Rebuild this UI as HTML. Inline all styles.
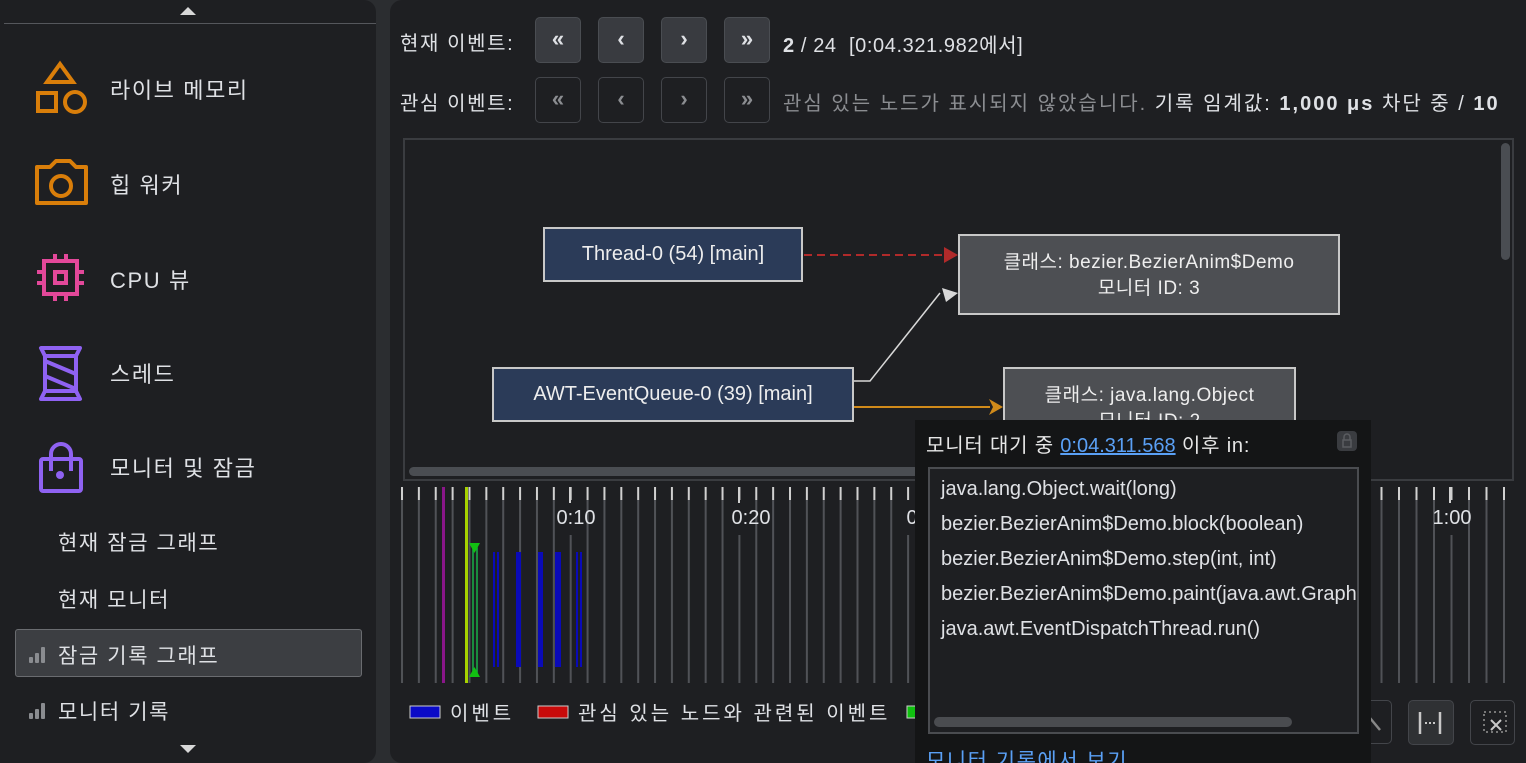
<!DOCTYPE html>
<html><head><meta charset="utf-8"><style>
*{box-sizing:border-box;margin:0;padding:0}
html,body{width:1526px;height:763px;overflow:hidden}
body{background:#2b2d30;position:relative;font-family:"Liberation Sans","Noto Sans CJK KR",sans-serif;color:#dfe1e5}
.a{position:absolute}
.left{left:0;top:0;width:376px;height:763px;background:#1e1f22;border-radius:0 12px 12px 0}
.main{left:390px;top:0;width:1136px;height:763px;background:#1e1f22;border-radius:12px 0 0 12px}
.it{position:absolute;left:110px;font-size:22px;color:#dfe1e5;letter-spacing:1.6px}
.sub{position:absolute;left:58px;font-size:21px;color:#dfe1e5;letter-spacing:1.6px}
.btn{position:absolute;width:46px;height:46px;border-radius:5px;background:#393b40;border:1px solid #4a4d52;color:#dfe1e5;font-size:22px;text-align:center;line-height:42px;font-weight:bold}
.btn2{background:#1e1f22;border:1px solid #43454a;color:#8b8d91}
.lbl{position:absolute;font-size:20px;color:#dfe1e5;letter-spacing:1.6px;white-space:nowrap}
.node{position:absolute;border:2px solid #c8c8c8;color:#eee;font-size:19px;text-align:center;white-space:nowrap}
.mono{font-size:20px;color:#dfe1e5;position:absolute;left:11px;white-space:nowrap}
</style></head><body>
<div class="a left"></div>
<div class="a" style="left:4px;top:0;width:372px;height:24px;border-bottom:1px solid #55575c"></div>
<div class="a" style="left:180px;top:7px;width:0;height:0;border-left:8px solid transparent;border-right:8px solid transparent;border-bottom:8px solid #d8d8d8"></div>
<div class="a" style="left:180px;top:745px;width:0;height:0;border-left:8px solid transparent;border-right:8px solid transparent;border-top:8px solid #d8d8d8"></div>

<svg class="a" style="left:0;top:0" width="376" height="763" fill="none" stroke-width="4">
 <g stroke="#d97e0a">
  <path d="M60 64 L73 82 L47 82 Z"/>
  <rect x="38" y="93" width="18" height="18"/>
  <circle cx="75" cy="102" r="10"/>
  <path d="M37 167 h13 l6-6 h14 l6 6 h10 v36 h-49 z" stroke-linejoin="round"/>
  <circle cx="61" cy="186" r="10"/>
 </g>
 <g stroke="#e3489a">
  <rect x="44" y="261" width="33" height="33"/>
  <rect x="55" y="272" width="11" height="11"/>
  <path d="M55 254v7M66 254v7M55 294v7M66 294v7M37 272h7M37 283h7M77 272h7M77 283h7"/>
 </g>
 <g stroke="#8f62f2" stroke-linejoin="round">
  <path d="M41 348h39l-4 8v35l4 8h-39l4-8v-35z"/>
  <path d="M45 356h31M45 391h31M45 361l31 13M45 376l31 13"/>
  <path d="M51 471v-17a10 10 0 0 1 20 0v17"/>
  <rect x="41" y="459" width="40" height="32" rx="2"/>
 </g>
 <circle cx="60" cy="475" r="4" fill="#8f62f2"/>
</svg>
<div class="it" style="top:73px">라이브 메모리</div>
<div class="it" style="top:168px">힙 워커</div>
<div class="it" style="top:263px">CPU 뷰</div>
<div class="it" style="top:357px">스레드</div>
<div class="it" style="top:451px">모니터 및 잠금</div>
<div class="sub" style="top:527px">현재 잠금 그래프</div>
<div class="sub" style="top:584px">현재 모니터</div>
<div class="a" style="left:15px;top:629px;width:347px;height:48px;background:#3c3e42;border:1px solid #6a6c70;border-radius:3px"></div>
<div class="sub" style="top:640px">잠금 기록 그래프</div>
<div class="sub" style="top:696px">모니터 기록</div>
<svg class="a" style="left:28px;top:645px" width="20" height="75"><g fill="#8a8c90"><rect x="1" y="12" width="4" height="6" rx="1"/><rect x="7" y="8" width="4" height="10" rx="1"/><rect x="13" y="2" width="4" height="16" rx="1"/><rect x="1" y="68" width="4" height="6" rx="1"/><rect x="7" y="64" width="4" height="10" rx="1"/><rect x="13" y="58" width="4" height="16" rx="1"/></g></svg>

<div class="a main"></div>
<div class="lbl" style="left:400px;top:27px">현재 이벤트:</div>
<div class="lbl" style="left:400px;top:87px">관심 이벤트:</div>
<div class="btn" style="left:535px;top:17px">«</div>
<div class="btn" style="left:598px;top:17px">‹</div>
<div class="btn" style="left:661px;top:17px">›</div>
<div class="btn" style="left:724px;top:17px">»</div>
<div class="btn btn2" style="left:535px;top:77px">«</div>
<div class="btn btn2" style="left:598px;top:77px">‹</div>
<div class="btn btn2" style="left:661px;top:77px">›</div>
<div class="btn btn2" style="left:724px;top:77px">»</div>
<div class="lbl" style="left:783px;top:29px;letter-spacing:0.6px"><b>2</b> / 24&nbsp; [0:04.321.982에서]</div>
<div class="lbl" style="left:783px;top:87px;letter-spacing:2px"><span style="color:#8b8d91">관심 있는 노드가 표시되지 않았습니다.</span> 기록 임계값: <b>1,000 μs</b> 차단 중 / <b>10</b></div>

<div class="a" style="left:403px;top:138px;width:1111px;height:343px;border:2px solid #3a3c40;background:#1e1f22"></div>
<div class="a" style="left:1501px;top:143px;width:9px;height:117px;background:#4a4d52;border-radius:5px"></div>
<div class="a" style="left:409px;top:467px;width:510px;height:9px;background:#4a4d52;border-radius:5px"></div>
<svg class="a" style="left:0;top:0" width="1526" height="480" fill="none">
 <path d="M804 255 H944" stroke="#b02a2a" stroke-width="2" stroke-dasharray="8 5"/>
 <path d="M958 255 l-14-8 v16 z" fill="#b02a2a"/>
 <path d="M854 381 H870 L940 293" stroke="#d8d8d8" stroke-width="1.5"/>
 <path d="M958 293 l-12 9 -4 -14 z" fill="#d8d8d8"/>
 <path d="M854 407 H990" stroke="#d08a1a" stroke-width="2"/>
 <path d="M1003 407 l-14-8 4 8 -4 8 z" fill="#d08a1a"/>
</svg>
<div class="node" style="left:543px;top:227px;width:260px;height:55px;background:#2b3b58;line-height:51px;font-size:20px">Thread-0 (54) [main]</div>
<div class="node" style="left:492px;top:367px;width:362px;height:55px;background:#2b3b58;line-height:51px;font-size:20px">AWT-EventQueue-0 (39) [main]</div>
<div class="node" style="left:958px;top:234px;width:382px;height:81px;background:#4d4f53;padding-top:14px;line-height:26px;letter-spacing:0.5px">클래스: bezier.BezierAnim$Demo<br>모니터 ID: 3</div>
<div class="node" style="left:1003px;top:367px;width:293px;height:70px;background:#4d4f53;padding-top:14px;line-height:26px;border-bottom:none;letter-spacing:0.5px">클래스: java.lang.Object<br>모니터 ID: 2</div>

<svg class="a" style="left:0;top:0" width="1526" height="763">
 <defs>
  <pattern id="tk" x="401" y="0" width="16.87" height="763" patternUnits="userSpaceOnUse">
   <rect x="0" y="500" width="2" height="183" fill="#505257"/><rect x="0" y="487" width="2" height="13" fill="#d0d0d0"/>
  </pattern>
  <pattern id="tk2" x="1380.5" y="0" width="17.5" height="763" patternUnits="userSpaceOnUse">
   <rect x="0" y="500" width="2" height="183" fill="#505257"/><rect x="0" y="487" width="2" height="13" fill="#d0d0d0"/>
  </pattern>
 </defs>
 <rect x="399" y="480" width="520" height="210" fill="url(#tk)"/>
 <rect x="1370" y="480" width="140" height="210" fill="url(#tk2)"/>
 <g fill="#1e1f22"><rect x="565" y="500" width="10" height="35"/><rect x="734" y="500" width="10" height="35"/><rect x="903" y="500" width="10" height="35"/><rect x="1445" y="500" width="10" height="35"/></g>
 <g fill="#d0d0d0"><rect x="569" y="487" width="2" height="16"/><rect x="738" y="487" width="2" height="16"/><rect x="1449" y="487" width="2" height="16"/></g>
 <g fill="#dfe1e5" font-family="Liberation Sans,sans-serif" font-size="20" text-anchor="middle"><text x="576" y="524">0:10</text><text x="751" y="524">0:20</text><text x="926" y="524">0:30</text><text x="1452" y="524">1:00</text></g>
 <rect x="442" y="487" width="3" height="196" fill="#8a168a"/>
 <rect x="465" y="487" width="3" height="196" fill="#a6d200"/>
 <rect x="473" y="548" width="4" height="128" fill="none" stroke="#18b048" stroke-width="1.5"/>
 <path d="M469 543h11l-5.5 10z M469 677h11l-5.5 -10z" fill="#12c012"/>
 <g fill="#0a0ab8"><rect x="493" y="552" width="2" height="115"/><rect x="497" y="552" width="2" height="115"/><rect x="516" y="552" width="5" height="115"/><rect x="538" y="552" width="5" height="115"/><rect x="555" y="552" width="6" height="115"/><rect x="576" y="552" width="2" height="115"/><rect x="580" y="552" width="2" height="115"/></g>
 <rect x="410" y="706" width="30" height="12" fill="#0a0ac8" stroke="#ccc"/>
 <rect x="538" y="706" width="30" height="12" fill="#c80a0a" stroke="#ccc"/>
 <rect x="907" y="706" width="10" height="12" fill="#10c010" stroke="#ccc"/>
</svg>
<div class="lbl" style="left:450px;top:697px;letter-spacing:3px">이벤트</div>
<div class="lbl" style="left:578px;top:697px;letter-spacing:3px">관심 있는 노드와 관련된 이벤트</div>

<div class="a" style="left:1359px;top:700px;width:33px;height:44px;border:1px solid #43454a;border-radius:5px"></div>
<div class="a" style="left:1408px;top:700px;width:46px;height:45px;background:#2f3134;border:1px solid #43454a;border-radius:5px"></div>
<div class="a" style="left:1470px;top:700px;width:45px;height:45px;border:1px solid #43454a;border-radius:5px"></div>
<svg class="a" style="left:1360px;top:700px" width="160" height="46" fill="none" stroke-width="2.5">
 <path d="M10 18 L20 30" stroke="#888"/>
 <path d="M60 12v22M80 12v22" stroke="#c8c8c8"/>
 <path d="M65 23h2M69 23h2M73 23h2" stroke="#c8c8c8" stroke-width="2"/>
 <rect x="124" y="12" width="22" height="20" stroke="#777" stroke-dasharray="2 3" stroke-width="2"/>
 <path d="M131 20l10 10M141 20l-10 10" stroke="#c8c8c8" stroke-width="2"/>
</svg>

<div class="a" style="left:915px;top:420px;width:456px;height:343px;background:#141516;overflow:hidden">
 <div class="a" style="left:11px;top:9px;font-size:20px;color:#e6e6e6;white-space:nowrap;letter-spacing:0.8px">모니터 대기 중 <span style="color:#5aa0f5;text-decoration:underline;letter-spacing:0">0:04.311.568</span> 이후 in:</div>
 <div class="a" style="left:11px;top:325px;font-size:21px;color:#5aa0f5;white-space:nowrap;letter-spacing:1.5px">모니터 기록에서 보기</div>
</div>
<div class="a" style="left:1337px;top:431px;width:20px;height:20px;border-radius:4px;background:#3a3c40"></div>
<svg class="a" style="left:1341px;top:433px" width="12" height="16" fill="none" stroke="#5a5c60" stroke-width="1.5"><path d="M3 7V4a3 3 0 0 1 6 0v3"/><rect x="2" y="7" width="8" height="7"/></svg>
<div class="a" style="left:928px;top:467px;width:431px;height:267px;border:2px solid #4a4c50;background:#1e1f22;overflow:hidden">
 <div class="mono" style="top:9px">java.lang.Object.wait(long)</div>
 <div class="mono" style="top:44px">bezier.BezierAnim$Demo.block(boolean)</div>
 <div class="mono" style="top:79px">bezier.BezierAnim$Demo.step(int, int)</div>
 <div class="mono" style="top:114px">bezier.BezierAnim$Demo.paint(java.awt.Graphics)</div>
 <div class="mono" style="top:149px">java.awt.EventDispatchThread.run()</div>
 <div class="a" style="left:4px;top:248px;width:358px;height:10px;border-radius:5px;background:#4a4c50"></div>
</div>
</body></html>
